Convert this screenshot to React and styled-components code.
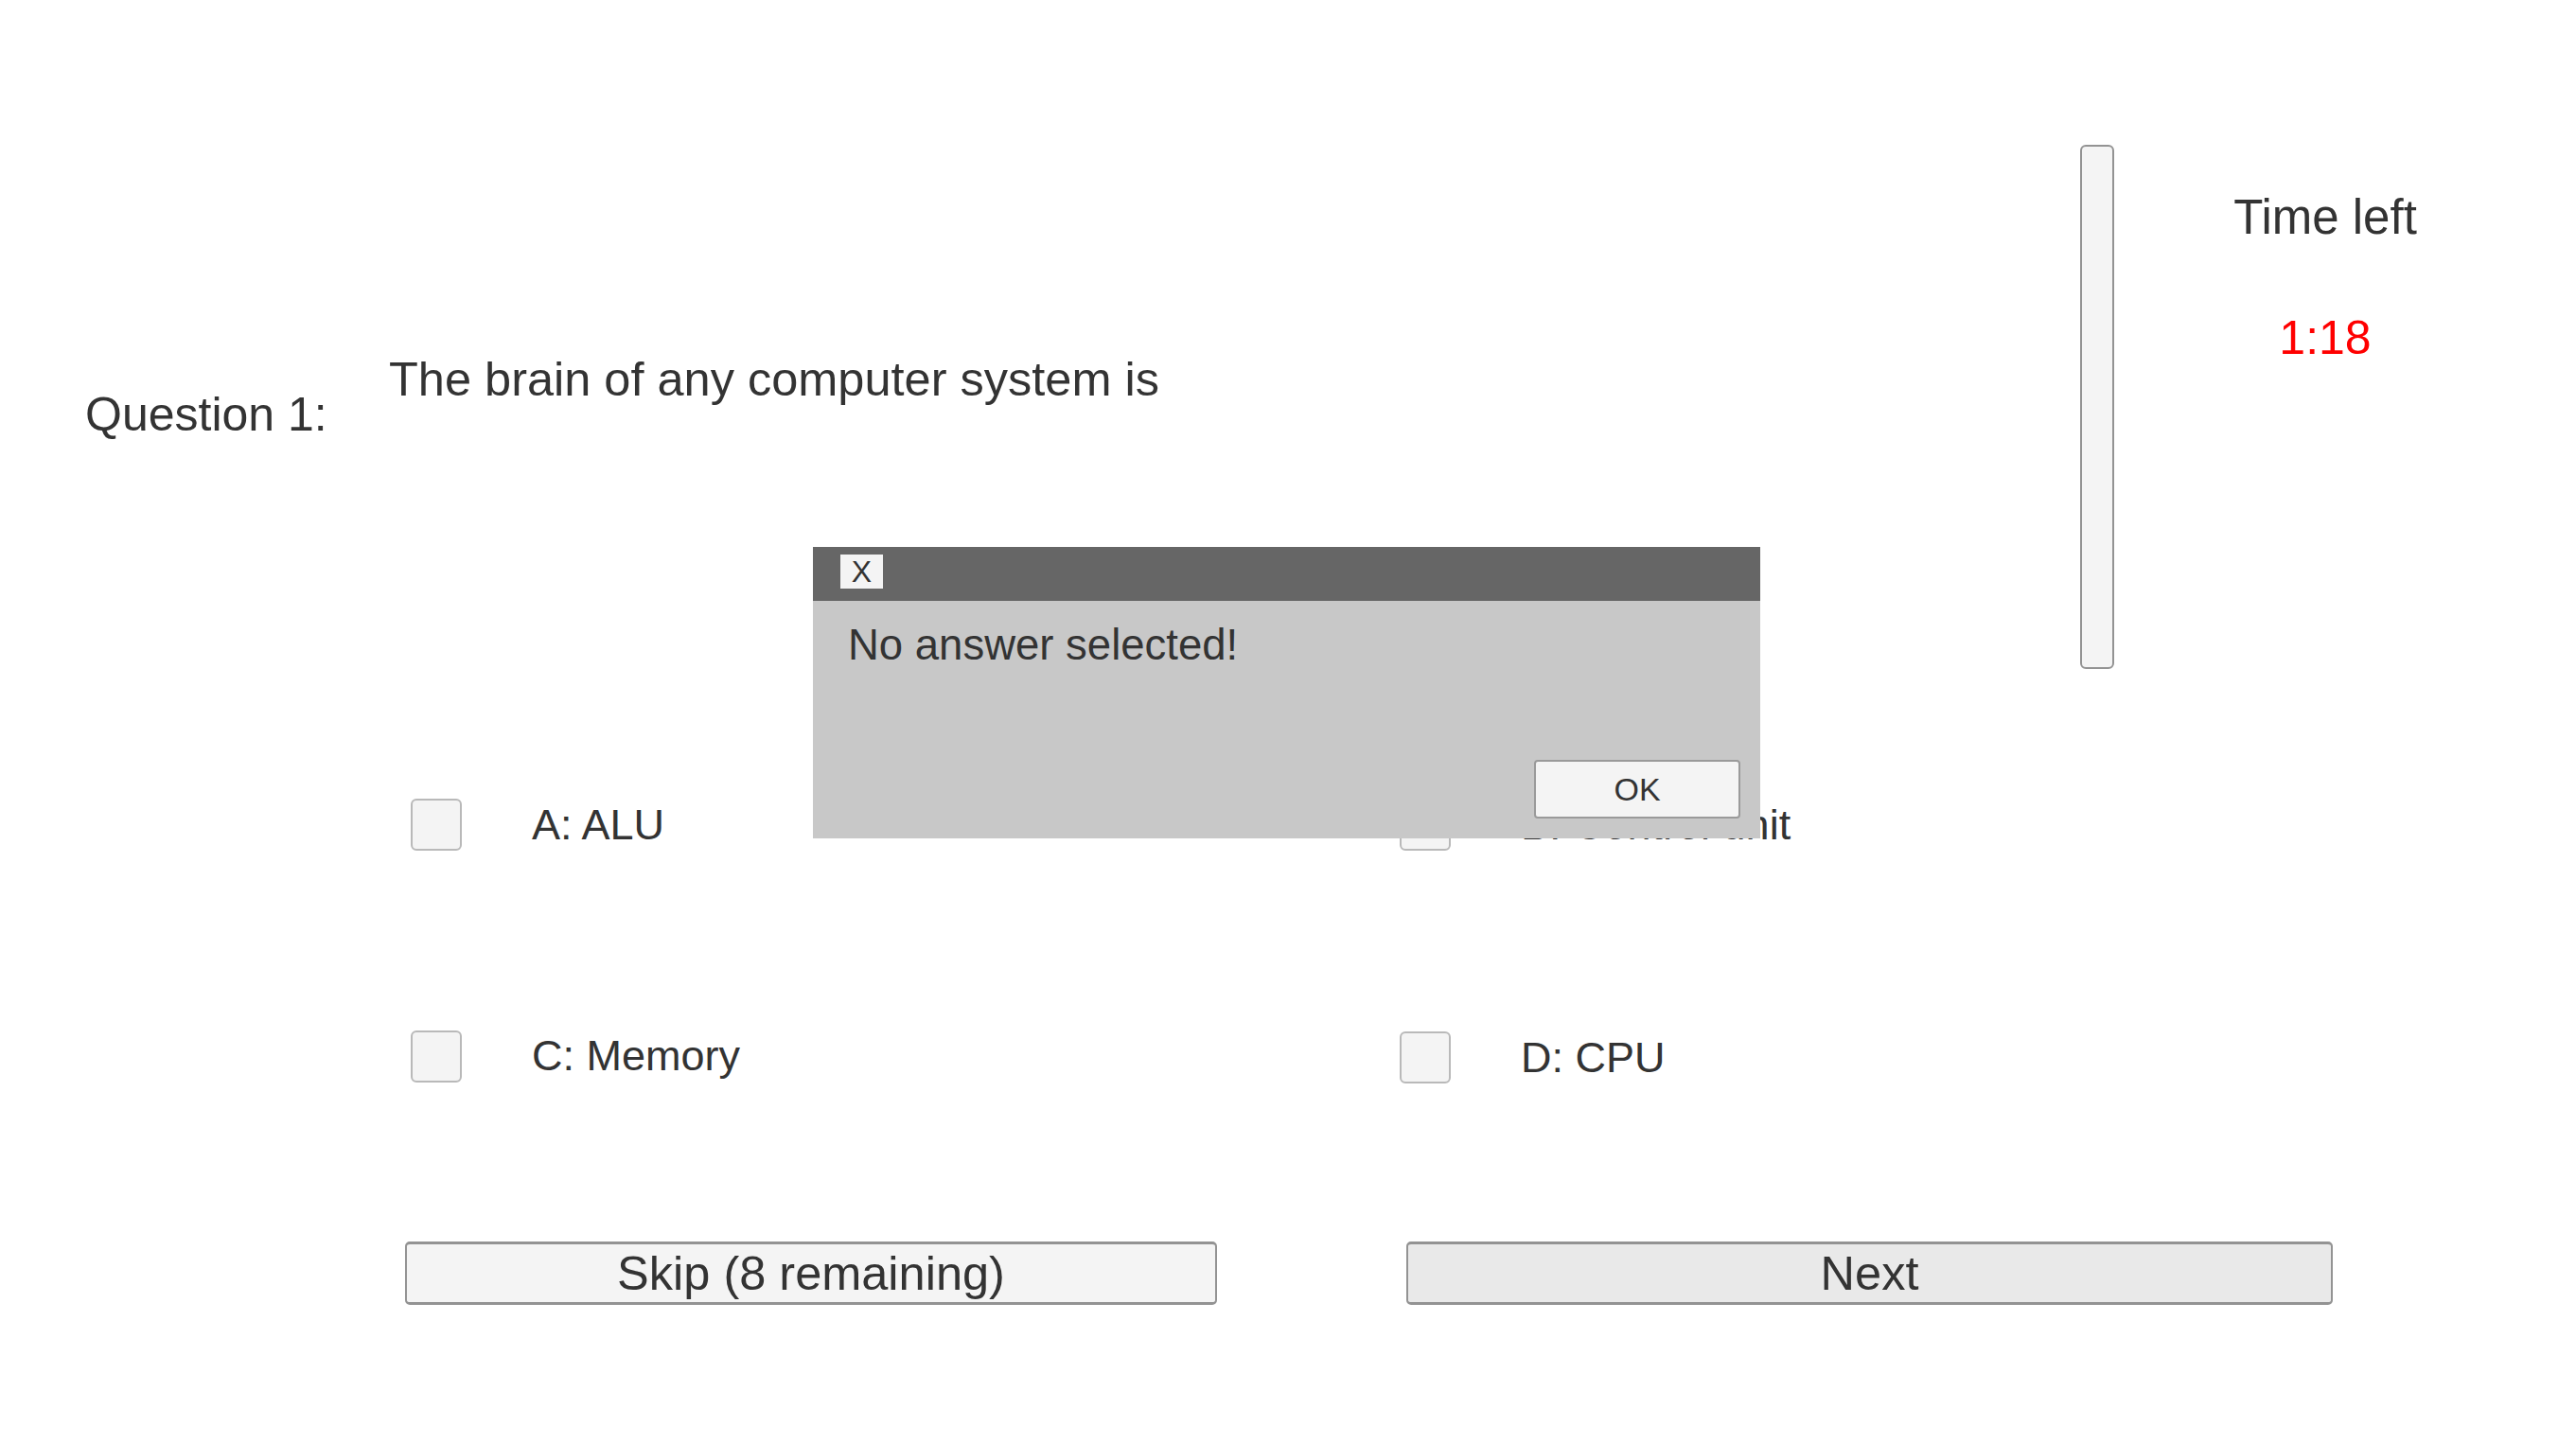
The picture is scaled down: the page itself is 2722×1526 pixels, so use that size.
import React from 'react';
import styled, { createGlobalStyle } from 'styled-components';

const GlobalStyle = createGlobalStyle`
  html, body {
    margin: 0;
    padding: 0;
    background: #ffffff;
  }
  body {
    font-family: "Liberation Sans", Arial, sans-serif;
    color: #333333;
    overflow: hidden;
  }
`;

const Page = styled.div`
  position: relative;
  width: 2722px;
  height: 1526px;
  background: #ffffff;
`;

const TopSection = styled.div`
  display: flex;
  height: 760px;
`;

const QuestionArea = styled.div`
  width: 2198px;
  display: flex;
  align-items: flex-start;
  padding: 372px 0 0 90px;
  box-sizing: border-box;
`;

const QuestionLabel = styled.div`
  width: 321px;
  flex-shrink: 0;
  margin-top: 38px;
  font-size: 50px;
  line-height: 57px;
  color: #333;
`;

const QuestionText = styled.div`
  font-size: 50.5px;
  line-height: 57px;
  color: #333;
`;

const ScrollTrack = styled.div`
  width: 36px;
  height: 554px;
  margin-top: 153px;
  box-sizing: border-box;
  background: #f4f4f4;
  border: 2px solid #939393;
  border-radius: 6px;
  flex-shrink: 0;
`;

const TimerPanel = styled.div`
  width: 446px;
  display: flex;
  flex-direction: column;
  align-items: center;
  padding-top: 201px;
`;

const TimerCaption = styled.div`
  font-size: 51px;
  line-height: 57px;
  color: #333;
`;

const TimerValue = styled.div`
  margin-top: 71px;
  font-size: 50px;
  line-height: 57px;
  color: #ff0000;
`;

const OptionsGrid = styled.div`
  display: grid;
  grid-template-columns: 1045px auto;
  row-gap: 188px;
  padding: 84px 0 0 434px;
`;

const Option = styled.label`
  display: flex;
  align-items: center;
  gap: 74px;
  margin-top: ${p => p.$shift || 0}px;
`;

const Checkbox = styled.span`
  width: 54px;
  height: 55px;
  box-sizing: border-box;
  background: #f4f4f4;
  border: 2px solid #b9b9b9;
  border-radius: 6px;
  flex-shrink: 0;
`;

const OptionText = styled.span`
  font-size: 45px;
  line-height: 50px;
  color: #333;
`;

const ButtonRow = styled.div`
  display: flex;
  gap: 200px;
  margin-top: 167px;
  padding-left: 428px;
`;

const ActionButton = styled.button`
  width: ${p => p.$width}px;
  height: 67px;
  box-sizing: border-box;
  background: ${p => (p.$dim ? '#e9e9e9' : '#f4f4f4')};
  border: 2px solid #939393;
  border-top-width: 3px;
  border-bottom-width: 3px;
  border-radius: 5px;
  font-family: "Liberation Sans", Arial, sans-serif;
  font-size: 50.5px;
  line-height: 58px;
  color: #333;
  padding: 0;
`;

const Dialog = styled.div`
  position: absolute;
  left: 859px;
  top: 578px;
  width: 1001px;
  height: 308px;
  display: flex;
  flex-direction: column;
  background: #c8c8c8;
`;

const DialogTitleBar = styled.div`
  height: 57px;
  background: #666666;
  display: flex;
  align-items: flex-start;
  padding: 8px 0 0 29px;
  box-sizing: border-box;
`;

const CloseButton = styled.button`
  width: 45px;
  height: 36px;
  background: #f4f4f4;
  border: none;
  padding: 0;
  font-family: "Liberation Sans", Arial, sans-serif;
  font-size: 32px;
  line-height: 36px;
  color: #333;
`;

const DialogBody = styled.div`
  flex: 1;
  display: flex;
  flex-direction: column;
  padding: 22px 21px 21px 37px;
`;

const DialogMessage = styled.div`
  font-size: 45.5px;
  line-height: 50px;
  color: #333;
`;

const OkButton = styled.button`
  align-self: flex-end;
  margin-top: auto;
  width: 218px;
  height: 62px;
  background: #f4f4f4;
  border: 2px solid #9a9a9a;
  border-radius: 4px;
  font-family: "Liberation Sans", Arial, sans-serif;
  font-size: 34px;
  color: #333;
  padding: 0;
`;

const options = [
  { key: 'A', text: 'ALU' },
  { key: 'B', text: 'Control unit' },
  { key: 'C', text: 'Memory' },
  { key: 'D', text: 'CPU', shift: 3 },
];

export default function App() {
  return (
    <Page>
      <GlobalStyle />
      <TopSection>
        <QuestionArea>
          <QuestionLabel>Question 1:</QuestionLabel>
          <QuestionText>The brain of any computer system is</QuestionText>
        </QuestionArea>
        <ScrollTrack />
        <TimerPanel>
          <TimerCaption>Time left</TimerCaption>
          <TimerValue>1:18</TimerValue>
        </TimerPanel>
      </TopSection>

      <OptionsGrid>
        {options.map(o => (
          <Option key={o.key} $shift={o.shift}>
            <Checkbox />
            <OptionText>{o.key}: {o.text}</OptionText>
          </Option>
        ))}
      </OptionsGrid>

      <ButtonRow>
        <ActionButton $width={858}>Skip (8 remaining)</ActionButton>
        <ActionButton $width={979} $dim>Next</ActionButton>
      </ButtonRow>

      <Dialog>
        <DialogTitleBar>
          <CloseButton>X</CloseButton>
        </DialogTitleBar>
        <DialogBody>
          <DialogMessage>No answer selected!</DialogMessage>
          <OkButton>OK</OkButton>
        </DialogBody>
      </Dialog>
    </Page>
  );
}
